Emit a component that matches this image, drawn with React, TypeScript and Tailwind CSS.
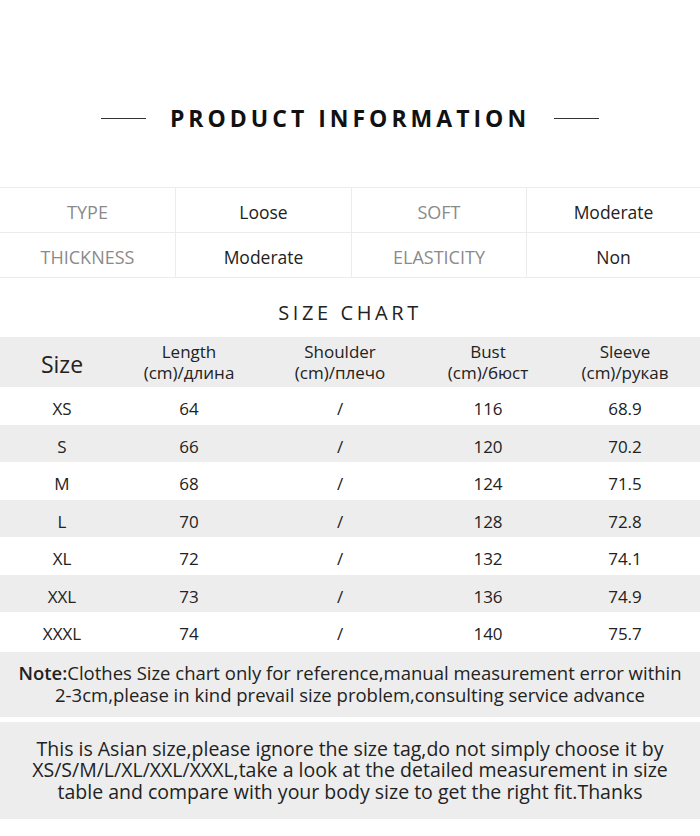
import React from 'react';

const FONT = { fontFamily: '"Open Sans", "Noto Sans", Arial, sans-serif' };

const INFO = [
  ['TYPE', 'Loose', 'SOFT', 'Moderate'],
  ['THICKNESS', 'Moderate', 'ELASTICITY', 'Non'],
];

const HEAD = [
  ['Length', '(cm)/длина'],
  ['Shoulder', '(cm)/плечо'],
  ['Bust', '(cm)/бюст'],
  ['Sleeve', '(cm)/рукав'],
];

const ROWS = [
  ['XS', '64', '/', '116', '68.9'],
  ['S', '66', '/', '120', '70.2'],
  ['M', '68', '/', '124', '71.5'],
  ['L', '70', '/', '128', '72.8'],
  ['XL', '72', '/', '132', '74.1'],
  ['XXL', '73', '/', '136', '74.9'],
  ['XXXL', '74', '/', '140', '75.7'],
];

const COLS = 'grid grid-cols-[124px_130px_172px_124px_150px]';

export default function App() {
  return (
    <div className="w-[700px] h-[836px] bg-white text-[#222]" style={FONT}>
      {/* 标题 */}
      <div className="h-[187px] flex items-start justify-center pt-[103px] gap-6">
        <div className="w-[45px] h-px bg-[#333] mt-[15px]" />
        <h1 className="text-[23px] font-bold tracking-[4px] leading-[30px] text-[#111]">PRODUCT INFORMATION</h1>
        <div className="w-[45px] h-px bg-[#333] mt-[15px]" />
      </div>

      {/* 属性表 */}
      <div className="border-t border-[#ececec]">
        {INFO.map((r, i) => (
          <div key={i} className="grid grid-cols-[175px_176px_175px_174px] h-[45px] border-b border-[#ececec]">
            {r.map((c, j) => (
              <div
                key={j}
                className={`flex items-center justify-center pt-[5px] ${j > 0 ? 'border-l border-[#ececec]' : ''} ${
                  j % 2 === 0 ? 'text-[#8a8a8a] text-[18px]' : 'text-[#222] text-[17.5px]'
                }`}
              >
                {c}
              </div>
            ))}
          </div>
        ))}
      </div>

      {/* 尺码表 */}
      <div className="h-[59px] flex items-center justify-center text-[20px] tracking-[3.6px] pt-[10px]">SIZE CHART</div>
      <div className={`${COLS} h-[50px] bg-[#ededed]`}>
        <div className="flex items-center justify-center text-[23px] pt-[4px]">Size</div>
        {HEAD.map(([a, b]) => (
          <div key={a} className="flex flex-col items-center justify-center text-[17px] leading-[21px]">
            <span>{a}</span>
            <span>{b}</span>
          </div>
        ))}
      </div>
      {ROWS.map((r, i) => (
        <div key={r[0]} className={`${COLS} h-[37.5px] text-[17px] ${i % 2 === 1 ? 'bg-[#ededed]' : ''}`}>
          {r.map((c, j) => (
            <div key={j} className="flex items-center justify-center pt-[6px]">
              {c}
            </div>
          ))}
        </div>
      ))}

      {/* 备注 */}
      <div className="mt-[2px] bg-[#ededed] h-[65px] flex items-center justify-center text-center text-[18.5px] leading-[22px] px-[14px]">
        <p>
          <span className="font-semibold">Note:</span>Clothes Size chart only for reference,manual measurement error within 2-3cm,please in kind prevail size problem,consulting service advance
        </p>
      </div>
      <div className="h-[5px]" />
      <div className="bg-[#ededed] h-[97px] flex items-center justify-center text-center text-[19.5px] leading-[21.5px] px-[20px]">
        <p>
          This is Asian size,please ignore the size tag,do not simply choose it by XS/S/M/L/XL/XXL/XXXL,take a look at the detailed measurement in size table and compare with your body size to get the right fit.Thanks
        </p>
      </div>
    </div>
  );
}
